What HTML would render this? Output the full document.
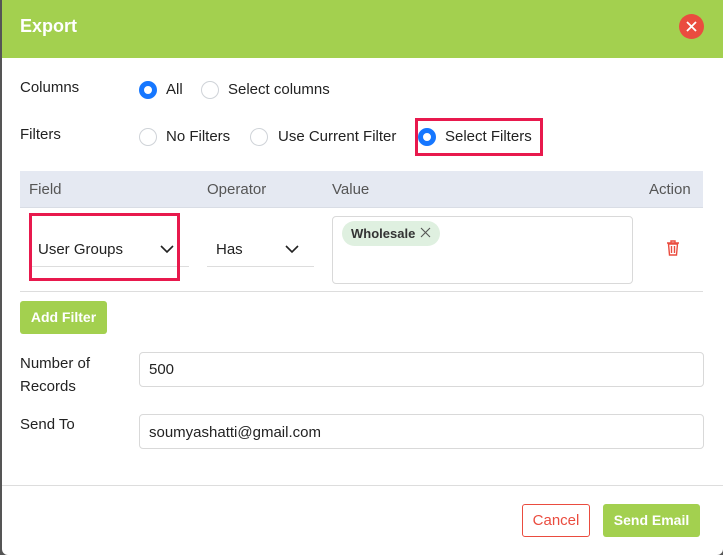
<!DOCTYPE html>
<html><head><style>
*{box-sizing:border-box;margin:0;padding:0}
body{width:723px;height:555px;background:#555;font-family:"Liberation Sans",sans-serif;font-size:15px;color:#222;position:relative;overflow:hidden}
.m{position:absolute;left:2px;top:0;width:721px;height:555px;background:#fff;border-radius:0 0 6px 6px;overflow:hidden}
.c{position:absolute;left:2px;top:0;width:719px;height:555px}
.a{position:absolute}
.hd{left:0;top:0;width:721px;height:58px;background:#a3d04f}
.r{position:absolute;width:18px;height:18px;border-radius:50%;border:1px solid #cfd3d8;background:#fff}
.r.on{border:5px solid #1677ff}
.in{position:absolute;border:1px solid #d9d9d9;border-radius:4px;background:#fff}
.pk{border:3px solid #e8194d;position:absolute}
</style></head><body><div class="m">
<div class="a hd"></div>
<div class="c">
<div class="a" style="left:16px;top:16px;color:#fff;font-size:18px;font-weight:bold">Export</div>
<div class="a" style="left:675px;top:14px;width:25px;height:25px;border-radius:50%;background:#ea4c3f"></div>
<svg class="a" style="left:681px;top:20px" width="13" height="13"><path d="M2 2L11 11M11 2L2 11" stroke="#fff" stroke-width="1.8"/></svg>

<div class="a" style="left:16px;top:79px">Columns</div>
<div class="r on" style="left:135px;top:81px"></div><div class="a" style="left:162px;top:81px">All</div>
<div class="r" style="left:197px;top:81px"></div><div class="a" style="left:224px;top:81px">Select columns</div>

<div class="a" style="left:16px;top:126px">Filters</div>
<div class="r" style="left:135px;top:128px"></div><div class="a" style="left:162px;top:128px">No Filters</div>
<div class="r" style="left:246px;top:128px"></div><div class="a" style="left:274px;top:128px">Use Current Filter</div>
<div class="pk" style="left:411px;top:118px;width:128px;height:38px"></div>
<div class="r on" style="left:414px;top:128px"></div><div class="a" style="left:441px;top:128px">Select Filters</div>

<div class="a" style="left:16px;top:171px;width:683px;height:37px;background:#e5e9f2;border-bottom:1px solid #d9dde5"></div>
<div class="a" style="left:25px;top:181px;color:#555">Field</div>
<div class="a" style="left:203px;top:181px;color:#555">Operator</div>
<div class="a" style="left:328px;top:181px;color:#555">Value</div>
<div class="a" style="left:645px;top:181px;color:#555">Action</div>

<div class="a" style="left:28px;top:266px;width:157px;border-top:1px solid #ddd"></div>
<div class="pk" style="left:25px;top:213px;width:151px;height:68px"></div>
<div class="a" style="left:34px;top:241px">User Groups</div>
<svg class="a" style="left:156px;top:244px" width="14" height="10"><path d="M1 2L7 8L13 2" fill="none" stroke="#222" stroke-width="1.6"/></svg>
<div class="a" style="left:203px;top:266px;width:107px;border-top:1px solid #ddd"></div>
<div class="a" style="left:212px;top:241px">Has</div>
<svg class="a" style="left:281px;top:244px" width="14" height="10"><path d="M1 2L7 8L13 2" fill="none" stroke="#222" stroke-width="1.6"/></svg>
<div class="in" style="left:328px;top:216px;width:301px;height:68px"></div>
<div class="a" style="left:338px;top:221px;width:98px;height:25px;border-radius:13px;background:#dff0e0"></div>
<div class="a" style="left:347px;top:226px;font-size:13px;font-weight:bold;color:#333">Wholesale</div>
<svg class="a" style="left:416px;top:227px" width="11" height="11"><path d="M1 1L10 10M10 1L1 10" stroke="#555" stroke-width="1.1"/></svg>
<svg class="a" style="left:662px;top:240px" width="14" height="16"><path d="M1 3H13M5 3V1H9V3M2.5 4L3.5 15H10.5L11.5 4ZM5.5 6V13M8.5 6V13" fill="none" stroke="#ea4c3f" stroke-width="1.4"/></svg>
<div class="a" style="left:16px;top:291px;width:683px;border-top:1px solid #ddd"></div>

<div class="a" style="left:16px;top:301px;width:87px;height:33px;background:#a3d04f;border-radius:3px;color:#fff;font-weight:bold;text-align:center;line-height:33px;font-size:14px">Add Filter</div>

<div class="a" style="left:16px;top:352px;line-height:23px">Number of<br>Records</div>
<div class="in" style="left:135px;top:352px;width:565px;height:35px"></div>
<div class="a" style="left:145px;top:361px">500</div>
<div class="a" style="left:16px;top:416px">Send To</div>
<div class="in" style="left:135px;top:414px;width:565px;height:35px"></div>
<div class="a" style="left:145px;top:424px">soumyashatti@gmail.com</div>

<div class="a" style="left:518px;top:504px;width:68px;height:33px;border:1px solid #ea4c3f;border-radius:3px;color:#ea4c3f;text-align:center;line-height:31px">Cancel</div>
<div class="a" style="left:599px;top:504px;width:97px;height:33px;background:#a3d04f;border-radius:3px;color:#fff;text-align:center;line-height:33px;font-weight:bold;font-size:14px">Send Email</div>
</div>
<div class="a" style="left:0;top:485px;width:721px;border-top:1px solid #ddd"></div>
</div></body></html>
